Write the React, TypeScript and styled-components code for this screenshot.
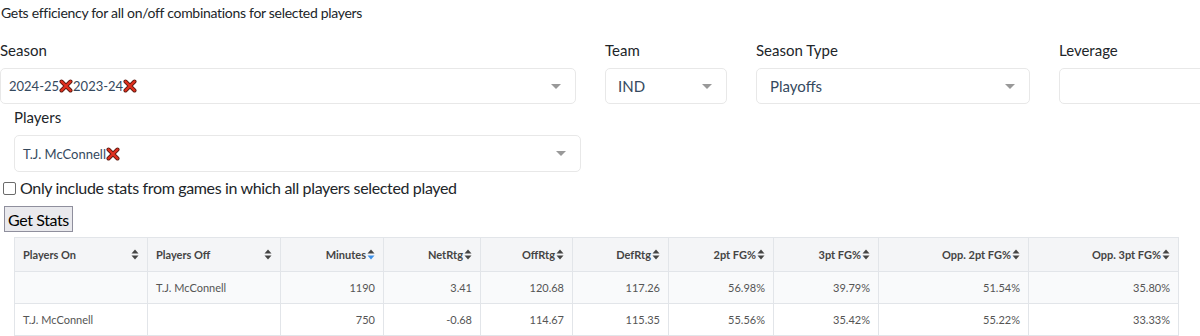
import React from "react";
import styled, { createGlobalStyle } from "styled-components";

const Global = createGlobalStyle`
  html, body { margin: 0; padding: 0; background: #fff; }
  body { font-family: Lato, "Open Sans", sans-serif; color: #212529; }
`;

const Page = styled.div`
  width: 1200px;
  height: 336px;
  overflow: hidden;
`;

const Intro = styled.div`
  font-size: 14px;
  letter-spacing: -0.3px;
  line-height: 20px;
  margin-top: 3px;
  padding-left: 1px;
  color: #212529;
`;

const FilterRow = styled.div`
  display: flex;
  gap: 29px;
  margin-top: 17px;
  width: 1400px;
`;

const Field = styled.div<{ $w: number; $indent?: number }>`
  width: ${(p) => p.$w}px;
  flex: none;
  margin-left: ${(p) => p.$indent || 0}px;
`;

const Label = styled.div`
  font-size: 15px;
  line-height: 20px;
  color: #212529;
  margin-bottom: 8px;
`;

const SelectBox = styled.div<{ $h: number; $pad: number }>`
  box-sizing: border-box;
  height: ${(p) => p.$h}px;
  border: 1px solid #e8e8e8;
  border-radius: 5px;
  background: #fff;
  display: flex;
  align-items: center;
  padding-left: ${(p) => p.$pad}px;
  padding-right: 14px;
  color: #35495e;
`;

const Tags = styled.div<{ $size: number }>`
  flex: 1;
  display: flex;
  align-items: center;
  font-size: ${(p) => p.$size}px;
  white-space: nowrap;
`;

const Caret = styled.span`
  width: 0;
  height: 0;
  border-left: 5px solid transparent;
  border-right: 5px solid transparent;
  border-top: 5px solid #999;
`;

const SecondRow = styled.div`
  margin-top: 3px;
`;

const CheckRow = styled.label`
  display: flex;
  align-items: center;
  gap: 4px;
  margin-top: 5px;
  padding-left: 3px;
  font-size: 16px;
  letter-spacing: -0.35px;
  line-height: 22px;
  color: #212529;
`;

const Box = styled.span`
  width: 11px;
  height: 11px;
  border: 1px solid #6b6b6b;
  border-radius: 2px;
  background: #fff;
`;

const Button = styled.button`
  margin: 7px 0 0 4px;
  height: 26px;
  padding: 0 3px;
  font-family: inherit;
  font-size: 16px;
  letter-spacing: -0.4px;
  color: #000;
  background: #e9e9ed;
  border: 1px solid #8f8f9d;
  border-radius: 0;
  display: block;
`;

const Table = styled.table`
  margin: 5px 0 0 14px;
  border-collapse: collapse;
  table-layout: fixed;
  width: 1164px;
  font-size: 11px;
  color: #555;
`;

const Col = styled.col<{ $w: number }>`
  width: ${(p) => p.$w}px;
`;

const Th = styled.th<{ $left?: boolean }>`
  height: 34px;
  box-sizing: border-box;
  padding: 0 8px;
  background: #f4f5f7;
  border: 1px solid #e2e5e9;
  font-weight: 700;
  color: #444;
  text-align: ${(p) => (p.$left ? "left" : "right")};
`;

const HeadInner = styled.div<{ $left?: boolean }>`
  display: flex;
  align-items: center;
  justify-content: ${(p) => (p.$left ? "space-between" : "flex-end")};
  gap: 1px;
`;

const Tr = styled.tr<{ $alt?: boolean }>`
  background: ${(p) => (p.$alt ? "#f9fafb" : "#fff")};
`;

const Td = styled.td<{ $left?: boolean }>`
  height: 32px;
  box-sizing: border-box;
  padding: 0 8px;
  border: 1px solid #e2e5e9;
  text-align: ${(p) => (p.$left ? "left" : "right")};
  white-space: nowrap;
`;

const Cross = () => (
  <svg width="14" height="14" viewBox="0 0 14 14" style={{ flex: "none" }}>
    <path d="M2.5 2.5 L11.5 11.5 M11.5 2.5 L2.5 11.5" stroke="#5a1a10" strokeWidth="4" strokeLinecap="round" />
    <path d="M2.5 2.5 L11.5 11.5 M11.5 2.5 L2.5 11.5" stroke="#e0301e" strokeWidth="2.4" strokeLinecap="round" />
  </svg>
);

const SortIcon = ({ active }: { active?: boolean }) => (
  <svg width="8" height="11" viewBox="0 0 8 11" style={{ flex: "none" }}>
    <path d="M0.5 4.5 L4 0.5 L7.5 4.5 Z" fill="#444" />
    <path d="M0.5 6.5 L4 10.5 L7.5 6.5 Z" fill={active ? "#3b8fe8" : "#444"} />
  </svg>
);

const widths = [133, 133, 103, 97, 92, 96, 105, 105, 150, 150];
const headers = [
  "Players On",
  "Players Off",
  "Minutes",
  "NetRtg",
  "OffRtg",
  "DefRtg",
  "2pt FG%",
  "3pt FG%",
  "Opp. 2pt FG%",
  "Opp. 3pt FG%",
];
const rows = [
  ["", "T.J. McConnell", "1190", "3.41", "120.68", "117.26", "56.98%", "39.79%", "51.54%", "35.80%"],
  ["T.J. McConnell", "", "750", "-0.68", "114.67", "115.35", "55.56%", "35.42%", "55.22%", "33.33%"],
];

export default function App() {
  return (
    <Page>
      <Global />
      <Intro>Gets efficiency for all on/off combinations for selected players</Intro>
      <FilterRow>
        <Field $w={576}>
          <Label>Season</Label>
          <SelectBox $h={36} $pad={8}>
            <Tags $size={13}>
              2024-25
              <Cross />
              2023-24
              <Cross />
            </Tags>
            <Caret />
          </SelectBox>
        </Field>
        <Field $w={122}>
          <Label>Team</Label>
          <SelectBox $h={36} $pad={12}>
            <Tags $size={15}>IND</Tags>
            <Caret />
          </SelectBox>
        </Field>
        <Field $w={274}>
          <Label>Season Type</Label>
          <SelectBox $h={36} $pad={13}>
            <Tags $size={15}>Playoffs</Tags>
            <Caret />
          </SelectBox>
        </Field>
        <Field $w={274}>
          <Label>Leverage</Label>
          <SelectBox $h={36} $pad={13}>
            <Tags $size={15}></Tags>
          </SelectBox>
        </Field>
      </FilterRow>
      <SecondRow>
        <Field $w={567} $indent={14}>
          <Label>Players</Label>
          <SelectBox $h={37} $pad={8}>
            <Tags $size={13}>
              T.J. McConnell
              <Cross />
            </Tags>
            <Caret />
          </SelectBox>
        </Field>
      </SecondRow>
      <CheckRow>
        <Box />
        Only include stats from games in which all players selected played
      </CheckRow>
      <Button>Get Stats</Button>
      <Table>
        <colgroup>
          {widths.map((w, i) => (
            <Col key={i} $w={w} />
          ))}
        </colgroup>
        <thead>
          <tr>
            {headers.map((h, i) => (
              <Th key={h} $left={i < 2}>
                <HeadInner $left={i < 2}>
                  <span>{h}</span>
                  <SortIcon active={i === 2} />
                </HeadInner>
              </Th>
            ))}
          </tr>
        </thead>
        <tbody>
          {rows.map((r, ri) => (
            <Tr key={ri} $alt={ri === 0}>
              {r.map((c, ci) => (
                <Td key={ci} $left={ci < 2}>
                  {c}
                </Td>
              ))}
            </Tr>
          ))}
        </tbody>
      </Table>
    </Page>
  );
}
